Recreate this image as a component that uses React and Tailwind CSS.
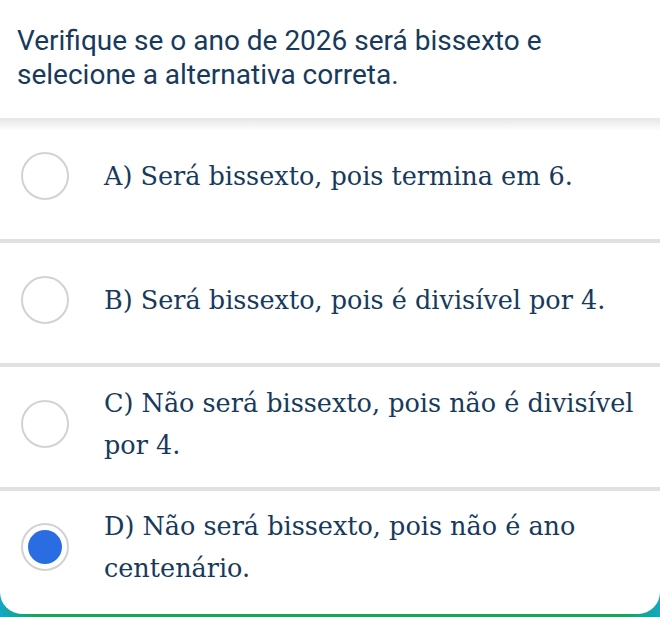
const options = [
  { id: "A", text: "A) Será bissexto, pois termina em 6." },
  { id: "B", text: "B) Será bissexto, pois é divisível por 4." },
  { id: "C", text: "C) Não será bissexto, pois não é divisível por 4." },
  { id: "D", text: "D) Não será bissexto, pois não é ano centenário." },
];

function Radio({ checked }) {
  return (
    <div className="w-12 h-12 shrink-0 rounded-full border-2 border-[#d2d2d2] bg-white flex items-center justify-center">
      {checked && <div className="w-[34px] h-[34px] rounded-full bg-[#2a6de3]" />}
    </div>
  );
}

export default function App() {
  const selected = "D";
  return (
    <div className="w-[660px] h-[617px] overflow-hidden bg-[linear-gradient(to_right,#12a7c4_0%,#1fa15e_5%,#1fa15e_95%,#12a7c4_100%)]">
      <div className="bg-white h-[614px] rounded-b-[22px] flex flex-col">
        <div className="px-[17px] pt-[24px] h-[118px] text-[28px] leading-[34px] text-[#173a5c] font-['Roboto',sans-serif]">
          Verifique se o ano de 2026 será bissexto e selecione a alternativa correta.
        </div>
        {options.map((o, i) => (
          <div key={o.id} className="relative flex flex-col">
            {i === 0 && (
              <div className="absolute top-0 left-0 right-0 h-[13px] bg-gradient-to-b from-[#e6e6e6] to-white/0" />
            )}
            <div
              className={`flex items-center gap-[35px] pl-[21px] pr-4 ${
                i === 0 ? "h-[121px] pb-[6px]" : i === 3 ? "h-[122px] pb-[10px]" : "h-[120px] pb-[6px]"
              }`}
            >
              <Radio checked={selected === o.id} />
              <div className="text-[25.5px] leading-[42px] text-[#173a5c] font-['DejaVu_Serif',serif]">
                {o.text}
              </div>
            </div>
            {i < 3 && <div className="h-1 bg-[#e1e1e1]" />}
          </div>
        ))}
      </div>
    </div>
  );
}
